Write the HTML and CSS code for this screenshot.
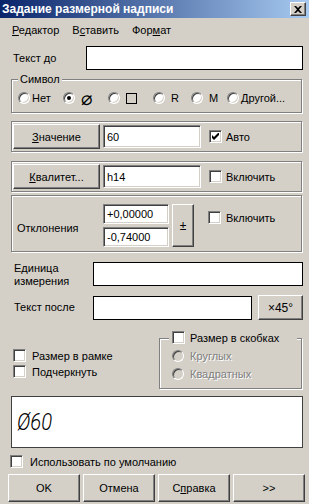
FILE: index.html
```html
<!DOCTYPE html>
<html lang="ru">
<head>
    <meta charset="UTF-8">
    <meta name="viewport" content="width=device-width, initial-scale=1.0">
    <title>Задание размерной надписи</title>
    <link rel="stylesheet" href="styles.css">
</head>
<body>
<div class="window">
    <div class="titlebar">
        <span class="title">Задание размерной надписи</span>
        <span class="close-btn">
            <svg width="8" height="7" viewBox="0 0 8 7"><path d="M0 0h2l2 2 2-2h2L5 3.5 8 7H6L4 5 2 7H0l3-3.5z" fill="#000"/></svg>
        </span>
    </div>

    <div class="menu">
        <span><u>Р</u>едактор</span>
        <span>В<u>с</u>тавить</span>
        <span>Фор<u>м</u>ат</span>
    </div>

    <div class="content">
        <div class="row-before">
            <span class="lbl lbl-before">Текст до</span>
            <div class="field flat"></div>
        </div>

        <div class="group symbol-group">
            <span class="legend">Символ</span>
            <div class="radios">
                <label class="opt opt-none"><span class="radio"></span><span class="opt-text">Нет</span></label>
                <label class="opt opt-sym"><span class="radio on"></span><span class="opt-text sym dia">⌀</span></label>
                <label class="opt opt-sym"><span class="radio"></span><span class="opt-text sym"><span class="square"></span></span></label>
                <label class="opt opt-r"><span class="radio"></span><span class="opt-text sym">R</span></label>
                <label class="opt opt-m"><span class="radio"></span><span class="opt-text sym">M</span></label>
                <label class="opt"><span class="radio"></span><span class="opt-text">Другой...</span></label>
            </div>
        </div>

        <div class="group value-box">
            <div class="btn btn-side"><span><u>З</u>начение</span></div>
            <div class="field sunken value-field">60</div>
            <label class="check check-side"><span class="cb">
                <svg width="7" height="7" viewBox="0 0 7 7"><path d="M0 2l2 2 5-5v3l-5 5-2-2z" fill="#000"/></svg>
            </span>Авто</label>
        </div>

        <div class="group value-box kval-box">
            <div class="btn btn-side"><span><u>К</u>валитет...</span></div>
            <div class="field sunken value-field">h14</div>
            <label class="check check-side"><span class="cb"></span>Включить</label>
        </div>

        <div class="group otkl-box">
            <span class="otkl-label">Отклонения</span>
            <div class="otkl-fields">
                <div class="field sunken small-field">+0,00000</div>
                <div class="field sunken small-field">-0,74000</div>
            </div>
            <div class="btn pm-btn">±</div>
            <label class="check check-otkl"><span class="cb"></span>Включить</label>
        </div>

        <div class="row-unit">
            <span class="lbl lbl-unit">Единица<br>измерения</span>
            <div class="field flat unit-field"></div>
        </div>

        <div class="row-after">
            <span class="lbl lbl-unit">Текст после</span>
            <div class="field flat after-field"></div>
            <div class="btn angle-btn">×45°</div>
        </div>

        <div class="lower">
            <div class="lower-left">
                <label class="check check-low"><span class="cb"></span>Размер в рамке</label>
                <label class="check check-low"><span class="cb"></span>Подчеркнуть</label>
            </div>
            <div class="group brackets">
                <label class="check bracket-legend"><span class="cb"></span>Размер в скобках</label>
                <div class="opt-off"><span class="radio off"></span><span class="off-text">Круглых</span></div>
                <div class="opt-off"><span class="radio off"></span><span class="off-text">Квадратных</span></div>
            </div>
        </div>

        <div class="preview">
            <span class="preview-text">Ø60</span>
        </div>

        <label class="check check-default"><span class="cb"></span>Использовать по умолчанию</label>
    </div>

    <div class="footer">
        <div class="btn foot-btn">OK</div>
        <div class="btn foot-btn">Отмена</div>
        <div class="btn foot-btn">С<u>п</u>равка</div>
        <div class="btn foot-btn">&gt;&gt;</div>
    </div>
</div>
</body>
</html>
```

FILE: styles.css
```css
/* classic dialog look */
body {
    margin: 0;
    background-color: #d4d0c8;
    font-family: "Liberation Sans", Arial, sans-serif;
    font-size: 11px;
    color: #000;
}

.window {
    width: 309px;
    height: 504px;
    overflow: hidden;
}

.titlebar {
    height: 18px;
    display: flex;
    align-items: center;
    padding-left: 2px;
    background: linear-gradient(to right, #0a246a, #a6caf0);
}

.title {
    color: #fff;
    font-weight: bold;
    font-size: 12px;
}

.close-btn {
    margin-left: auto;
    margin-right: 3px;
    width: 16px;
    height: 14px;
    box-sizing: border-box;
    background-color: #d4d0c8;
    border: 1px solid;
    border-color: #fff #404040 #404040 #fff;
    box-shadow: inset -1px -1px #808080;
    display: flex;
    align-items: center;
    justify-content: center;
}

.menu {
    height: 24px;
    display: flex;
    align-items: center;
    gap: 13px;
    padding-left: 12px;
}

.content {
    padding: 4px 6px 0 11px;
}

/* fields and buttons */
.field {
    box-sizing: border-box;
    background-color: #fff;
    padding-left: 3px;
    display: flex;
    align-items: center;
}

.flat {
    border: 1px solid #000;
}

.sunken {
    border: 1px solid;
    border-color: #808080 #fff #fff #808080;
    box-shadow: inset 1px 1px #404040, inset -1px -1px #d4d0c8;
}

.btn {
    box-sizing: border-box;
    background-color: #d4d0c8;
    border: 1px solid;
    border-color: #fff #404040 #404040 #fff;
    box-shadow: inset -1px -1px #808080;
    display: flex;
    align-items: center;
    justify-content: center;
}

.group {
    box-sizing: border-box;
    border: 1px solid #808080;
    box-shadow: 1px 1px 0 #fff, inset 1px 1px 0 #fff;
    margin-right: 1px;
}

.legend {
    display: block;
    width: fit-content;
    background-color: #d4d0c8;
    padding: 0 2px;
    margin-top: -7px;
    line-height: 13px;
}

/* radio and checkbox */
.radio {
    width: 12px;
    height: 12px;
    box-sizing: border-box;
    flex-shrink: 0;
    border-radius: 50%;
    background-color: #fff;
    border: 1px solid;
    border-color: #808080 #fff #fff #808080;
    box-shadow: inset 1px 1px #404040, inset -1px -1px #d4d0c8;
    display: flex;
    align-items: center;
    justify-content: center;
}

.radio.on::after {
    content: "";
    width: 4px;
    height: 4px;
    border-radius: 50%;
    background-color: #000;
}

.radio.off {
    background-color: #d4d0c8;
}

.check {
    display: flex;
    align-items: center;
    gap: 4px;
}

.cb {
    width: 13px;
    height: 13px;
    box-sizing: border-box;
    flex-shrink: 0;
    background-color: #fff;
    border: 1px solid;
    border-color: #808080 #fff #fff #808080;
    box-shadow: inset 1px 1px #404040, inset -1px -1px #d4d0c8;
    display: flex;
    align-items: center;
    justify-content: center;
}

/* Текст до */
.row-before {
    display: flex;
    align-items: center;
    height: 24px;
}

.lbl-before {
    width: 73px;
    padding-left: 2px;
}

.row-before .field {
    flex: 1;
    height: 24px;
}

/* Символ */
.symbol-group {
    margin-top: 9px;
    height: 34px;
    padding-left: 6px;
}

.radios {
    display: flex;
    align-items: center;
    height: 14px;
    margin-top: 5px;
}

.opt {
    display: flex;
    align-items: center;
    width: 45px;
}

.opt-r {
    width: 38px;
}

.opt-m {
    width: 36px;
}

.opt-text {
    margin-left: 2px;
}

.opt-text.sym {
    margin-left: 6px;
}

.dia {
    font-family: "DejaVu Sans", sans-serif;
    font-size: 19px;
    line-height: 14px;
    margin-left: 4px;
}

.square {
    display: block;
    width: 11px;
    height: 11px;
    box-sizing: border-box;
    border: 1px solid #000;
}

/* Значение / Квалитет */
.value-box {
    margin-top: 8px;
    height: 31px;
    display: flex;
    align-items: center;
    padding-left: 1px;
}

.kval-box {
    margin-top: 9px;
}

.btn-side {
    width: 87px;
    height: 25px;
}

.value-field {
    width: 98px;
    height: 23px;
    margin-left: 3px;
}

.check-side {
    margin-left: 8px;
}

/* Отклонения */
.otkl-box {
    margin-top: 3px;
    height: 57px;
    display: flex;
    align-items: flex-start;
    padding-top: 8px;
}

.otkl-label {
    width: 86px;
    padding-left: 5px;
    align-self: center;
}

.otkl-fields {
    display: flex;
    flex-direction: column;
    gap: 3px;
}

.small-field {
    width: 66px;
    height: 20px;
}

.pm-btn {
    width: 22px;
    height: 43px;
    margin-left: 3px;
    font-size: 12px;
}

.check-otkl {
    margin-left: 14px;
    margin-top: 7px;
    gap: 5px;
}

/* Единица, Текст после */
.row-unit {
    display: flex;
    align-items: flex-start;
    margin-top: 10px;
}

.lbl-unit {
    width: 79px;
    padding-left: 3px;
    line-height: 13px;
}

.unit-field {
    flex: 1;
    height: 24px;
}

.row-after {
    display: flex;
    align-items: center;
    margin-top: 7px;
}

.after-field {
    width: 159px;
    height: 24px;
}

.angle-btn {
    margin-left: auto;
    width: 45px;
    height: 25px;
    font-size: 12px;
}

/* рамка / скобки */
.lower {
    display: flex;
    align-items: flex-start;
}

.lower-left {
    width: 147px;
    padding-top: 29px;
    padding-left: 2px;
    display: flex;
    flex-direction: column;
    gap: 3px;
}

.check-low {
    gap: 6px;
}

.brackets {
    margin-top: 18px;
    width: 144px;
    height: 51px;
}

.bracket-legend {
    width: 125px;
    margin: -8px 0 0 9px;
    padding-left: 3px;
    background-color: #d4d0c8;
    height: 13px;
    gap: 5px;
}

.opt-off {
    display: flex;
    align-items: center;
    gap: 6px;
    height: 12px;
    margin: 6px 0 0 12px;
}

.off-text {
    color: #808080;
    text-shadow: 1px 1px 0 #fff;
}

/* preview */
.preview {
    margin-top: 7px;
    height: 52px;
    box-sizing: border-box;
    border: 1px solid #404040;
    background-color: #fff;
    display: flex;
    align-items: center;
    padding-left: 5px;
}

.preview-text {
    font-family: Roboto, Inter, sans-serif;
    font-weight: 300;
    font-style: italic;
    font-size: 23px;
    color: #000;
    transform: scaleX(0.88);
    transform-origin: left center;
}

.check-default {
    margin: 7px 0 0 -1px;
    gap: 7px;
}

/* buttons */
.footer {
    display: flex;
    gap: 3px;
    padding: 6px 0 0 8px;
}

.foot-btn {
    width: 72px;
    height: 28px;
}
```
